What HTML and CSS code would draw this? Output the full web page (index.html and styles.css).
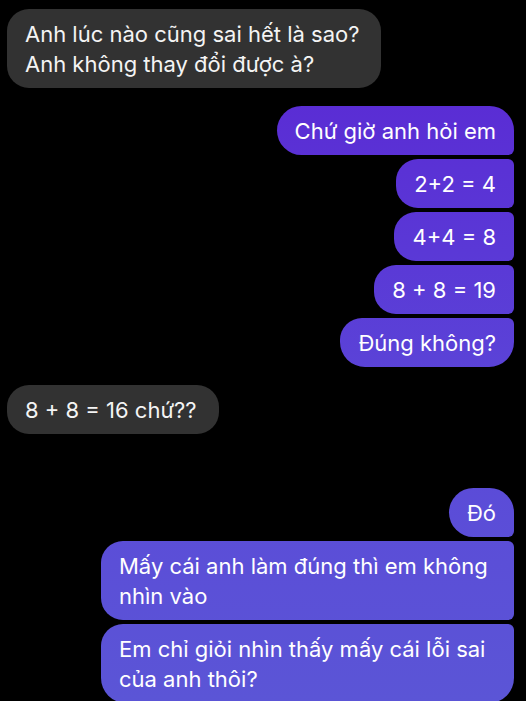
FILE: index.html
```html
<!DOCTYPE html>
<html lang="vi">
<head>
<meta charset="utf-8">
<link rel="stylesheet" href="styles.css">
</head>
<body>
<div class="chat">
  <div class="group in">
    <div class="msg single">Anh lúc nào cũng sai hết là sao?<br>Anh không thay đổi được à?</div>
  </div>
  <div class="group out">
    <div class="msg first">Chứ giờ anh hỏi em</div>
    <div class="msg mid">2+2 = 4</div>
    <div class="msg mid">4+4 = 8</div>
    <div class="msg mid">8 + 8 = 19</div>
    <div class="msg last">Đúng không?</div>
  </div>
  <div class="group in">
    <div class="msg single">8 + 8 = 16 chứ??</div>
  </div>
  <div class="group out late">
    <div class="msg first">Đó</div>
    <div class="msg mid">Mấy cái anh làm đúng thì em không nhìn vào</div>
    <div class="msg last">Em chỉ giỏi nhìn thấy mấy cái lỗi sai của anh thôi?</div>
  </div>
</div>
</body>
</html>
```

FILE: styles.css
```css
html, body {
  margin: 0;
  padding: 0;
  background: #000;
}
body {
  width: 526px;
  height: 701px;
  overflow: hidden;
  font-family: "Inter", "Noto Sans", sans-serif;
  font-size: 22px;
  -webkit-font-smoothing: antialiased;
}
.chat {
  display: flex;
  flex-direction: column;
  gap: 18px;
  padding: 9px 12px 0 7px;
}
.group {
  display: flex;
  flex-direction: column;
  gap: 4px;
}
.group.in { align-items: flex-start; }
.group.out { align-items: flex-end; }
.group.late { margin-top: 36px; }
.msg {
  max-width: 413px;
  box-sizing: border-box;
  padding: 9.5px 18px;
  line-height: 30px;
  border-radius: 25px;
  color: #f4f4f4;
}
.in .msg {
  background: #323232;
  padding-right: 22px;
}
.in .msg.single { border-radius: 22px; }
.out .msg {
  color: #fff;
  background: linear-gradient(180deg, #5a25d3 0px, #5a38d6 250px, #5b4ad8 450px, #5b55d6 701px);
  background-attachment: fixed;
}
.out .msg.first { border-radius: 25px 25px 6px 25px; }
.out .msg.mid { border-radius: 22px 6px 6px 22px; }
.out .msg.last { border-radius: 22px 6px 25px 25px; }
```
